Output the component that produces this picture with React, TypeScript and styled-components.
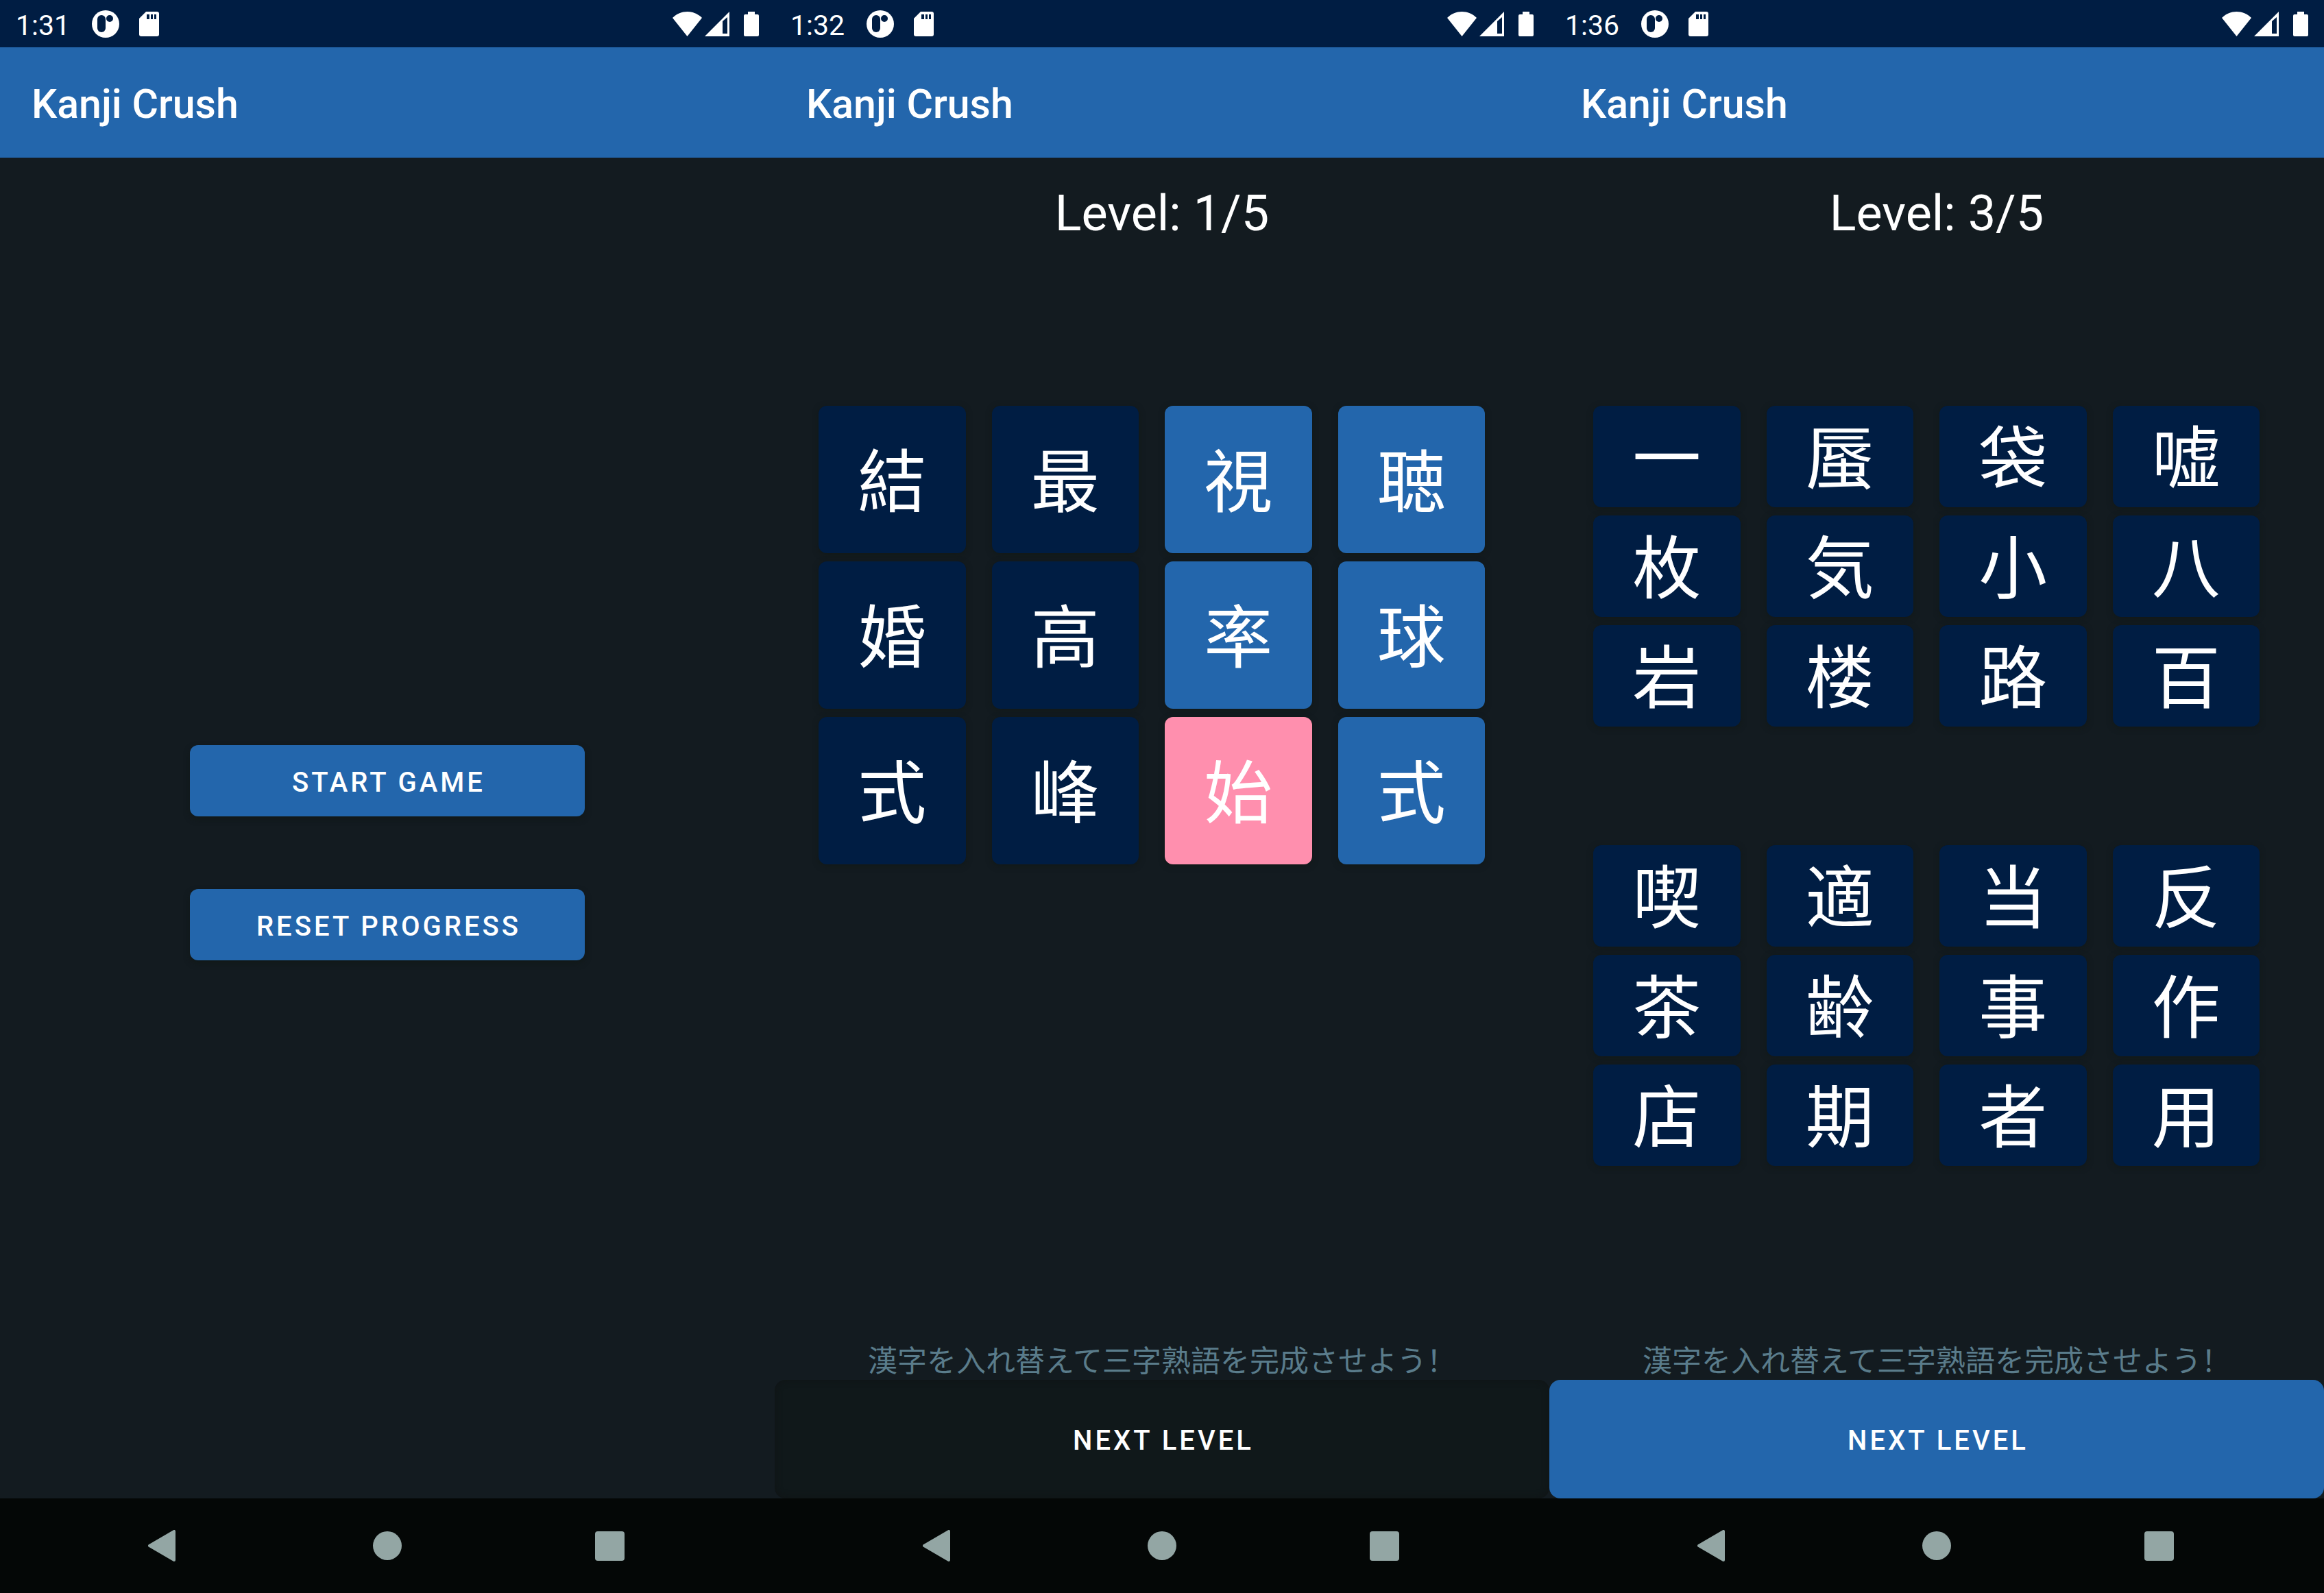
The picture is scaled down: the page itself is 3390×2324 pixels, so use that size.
import React from "react";
import styled, { createGlobalStyle } from "styled-components";

const color = {
  background: "#131b20",
  navy: "#001d43",
  blue: "#2366ac",
  pink: "#ff8fae",
  disabled: "#10181a",
  hint: "#5a7c8b",
  navBar: "#040706",
  navIcon: "#93a6a4",
  text: "#ffffff",
};

const GlobalStyle = createGlobalStyle`
  *, *::before, *::after { box-sizing: border-box; }
  body {
    margin: 0;
    background: ${color.background};
    color: ${color.text};
    font-family: Roboto, "Noto Sans CJK SC", sans-serif;
  }
  button { font: inherit; color: inherit; border: 0; margin: 0; padding: 0; cursor: pointer; }
  button:disabled { cursor: default; }
  svg { display: block; }
`;

const Screens = styled.div`
  display: grid;
  grid-template-columns: repeat(3, minmax(0, 1fr));
  min-height: 100vh;
`;

const Phone = styled.section`
  display: flex;
  flex-direction: column;
  background: ${color.background};
`;

const StatusBar = styled.div`
  display: flex;
  align-items: center;
  height: 69px;
  padding: 0 23px;
  background: ${color.navy};
`;

const Clock = styled.time`
  padding-top: 4px;
  margin-right: 32px;
  font-size: 41px;
  line-height: 48px;
`;

const Notifications = styled.div`
  display: flex;
  align-items: center;
  gap: 29px;
  flex: 1;
`;

const SystemIcons = styled.div`
  display: flex;
  align-items: center;
`;

const BatterySlot = styled.span`
  margin-left: 20px;
`;

const AppBar = styled.header`
  display: flex;
  align-items: center;
  height: 161px;
  padding: 4px 46px 0;
  background: ${color.blue};
`;

const Title = styled.h1`
  margin: 0;
  font-size: 59px;
  font-weight: 500;
  line-height: 68px;
`;

const Menu = styled.main`
  display: flex;
  flex: 1;
  flex-direction: column;
  align-items: center;
  justify-content: center;
  gap: 106px;
  padding-top: 72px;
`;

const ActionButton = styled.button`
  height: 104px;
  padding-top: 4px;
  border-radius: 12px;
  background: ${color.blue};
  font-size: 40px;
  font-weight: 500;
  letter-spacing: 4px;
  text-indent: 4px;
  text-transform: uppercase;
  box-shadow: 0 4px 8px rgba(16, 24, 22, 0.8);
`;

const MenuButton = styled(ActionButton)`
  width: 51%;
`;

const NextButton = styled(ActionButton)`
  height: 173px;
  border-radius: 16px;
  box-shadow: none;

  &:disabled {
    background: ${color.disabled};
    box-shadow: inset 0 0 8px 2px #101516;
  }
`;

const Game = styled.main`
  display: flex;
  flex: 1;
  flex-direction: column;
`;

const Level = styled.h2`
  margin: 40px 0 0;
  font-size: 72px;
  font-weight: 400;
  line-height: 84px;
  text-align: center;
`;

const Boards = styled.div`
  display: flex;
  flex: 1;
  flex-direction: column;
  gap: 173px;
  padding: 238px 94px 0 64px;
`;

const Board = styled.div`
  display: grid;
  grid-template-columns: repeat(4, minmax(0, 1fr));
  gap: 12px 38px;
`;

type Tone = "navy" | "blue" | "pink";

const Tile = styled.button<{ $tone: Tone; $tall: boolean }>`
  height: ${(p) => (p.$tall ? 215 : 148)}px;
  padding-bottom: 8px;
  border-radius: 12px;
  background: ${(p) => color[p.$tone]};
  font-family: "Noto Sans CJK SC", sans-serif;
  font-size: 100px;
  line-height: 120px;
  box-shadow: 0 2px 8px rgba(18, 24, 22, 0.9);
`;

const Hint = styled.p`
  margin: 0;
  color: ${color.hint};
  font-size: 43px;
  line-height: 54px;
  text-align: center;
`;

const NavBar = styled.nav`
  display: flex;
  justify-content: center;
  height: 138px;
  background: ${color.navBar};
`;

const NavButton = styled.button`
  display: flex;
  flex: 0 1 324px;
  align-items: center;
  justify-content: center;
  background: none;
`;

const AppIcon = () => (
  <svg width="40" height="40" viewBox="0 0 40 40" aria-hidden="true">
    <circle cx="20" cy="20" r="20" fill="#fff" />
    <rect x="8" y="7" width="12" height="25" rx="6" fill={color.navy} />
    <circle cx="26" cy="12" r="5" fill={color.navy} />
  </svg>
);

const CardIcon = () => (
  <svg width="29" height="36" viewBox="0 0 29 36" aria-hidden="true">
    <path d="M10 0H26a3 3 0 0 1 3 3V33a3 3 0 0 1-3 3H3a3 3 0 0 1-3-3V10Z" fill="#fff" />
    <path d="M11 4h4v7h-4zM17 4h3v7h-3zM22 4h3v7h-3z" fill={color.navy} />
  </svg>
);

const WifiIcon = () => (
  <svg width="43" height="36" viewBox="0 0 43 36" aria-hidden="true">
    <path d="M0 9C12-3 31-3 43 9L21.500 36Z" fill="#fff" />
  </svg>
);

const SignalIcon = () => (
  <svg width="41" height="36" viewBox="-4 0 41 36" aria-hidden="true">
    <path d="M36 0V36H0Z" fill="#fff" />
    <path d="M26 14L33 8V32H26Z" fill={color.navy} />
  </svg>
);

const BatteryIcon = () => (
  <svg width="22" height="36" viewBox="0 0 22 36" aria-hidden="true">
    <path d="M6 0H16V4H20a2 2 0 0 1 2 2V34a2 2 0 0 1-2 2H2a2 2 0 0 1-2-2V6a2 2 0 0 1 2-2H6Z" fill="#fff" />
  </svg>
);

const BackIcon = () => (
  <svg width="50" height="46" viewBox="0 0 50 46" aria-hidden="true">
    <path
      d="M2 23L38 2V44Z"
      fill={color.navIcon}
      stroke={color.navIcon}
      strokeWidth="4"
      strokeLinejoin="round"
    />
  </svg>
);

const HomeIcon = () => (
  <svg width="42" height="42" viewBox="0 0 42 42" aria-hidden="true">
    <circle cx="21" cy="21" r="21" fill={color.navIcon} />
  </svg>
);

const RecentsIcon = () => (
  <svg width="43" height="43" viewBox="0 0 43 43" aria-hidden="true">
    <rect width="43" height="43" rx="4" fill={color.navIcon} />
  </svg>
);

const PhoneFrame = ({ time, children }: { time: string; children: React.ReactNode }) => (
  <Phone>
    <StatusBar>
      <Clock>{time}</Clock>
      <Notifications>
        <AppIcon />
        <CardIcon />
      </Notifications>
      <SystemIcons>
        <WifiIcon />
        <SignalIcon />
        <BatterySlot>
          <BatteryIcon />
        </BatterySlot>
      </SystemIcons>
    </StatusBar>
    <AppBar>
      <Title>Kanji Crush</Title>
    </AppBar>
    {children}
    <NavBar aria-label="System">
      <NavButton type="button" aria-label="Back">
        <BackIcon />
      </NavButton>
      <NavButton type="button" aria-label="Home">
        <HomeIcon />
      </NavButton>
      <NavButton type="button" aria-label="Recent apps">
        <RecentsIcon />
      </NavButton>
    </NavBar>
  </Phone>
);

type GameProps = {
  level: number;
  boards: string[][];
  tones?: Record<string, Tone>;
  tall?: boolean;
  complete?: boolean;
};

const GameScreen = ({ level, boards, tones = {}, tall = false, complete = false }: GameProps) => (
  <Game>
    <Level>Level: {level}/5</Level>
    <Boards>
      {boards.map((rows, b) => (
        <Board key={b}>
          {rows.flatMap((row, r) =>
            [...row].map((kanji, c) => (
              <Tile key={`${r}-${c}`} type="button" $tall={tall} $tone={tones[`${r}-${c}`] ?? "navy"}>
                {kanji}
              </Tile>
            ))
          )}
        </Board>
      ))}
    </Boards>
    <Hint>漢字を入れ替えて三字熟語を完成させよう！</Hint>
    <NextButton type="button" disabled={!complete}>
      Next level
    </NextButton>
  </Game>
);

const unsolved: Record<string, Tone> = {
  "0-2": "blue",
  "0-3": "blue",
  "1-2": "blue",
  "1-3": "blue",
  "2-2": "pink",
  "2-3": "blue",
};

export default function App() {
  return (
    <>
      <GlobalStyle />
      <Screens lang="zh-Hans">
        <PhoneFrame time="1:31">
          <Menu>
            <MenuButton type="button">Start game</MenuButton>
            <MenuButton type="button">Reset progress</MenuButton>
          </Menu>
        </PhoneFrame>
        <PhoneFrame time="1:32">
          <GameScreen level={1} tall boards={[["結最視聴", "婚高率球", "式峰始式"]]} tones={unsolved} />
        </PhoneFrame>
        <PhoneFrame time="1:36">
          <GameScreen
            level={3}
            complete
            boards={[
              ["一蜃袋嘘", "枚気小八", "岩楼路百"],
              ["喫適当反", "茶齢事作", "店期者用"],
            ]}
          />
        </PhoneFrame>
      </Screens>
    </>
  );
}
